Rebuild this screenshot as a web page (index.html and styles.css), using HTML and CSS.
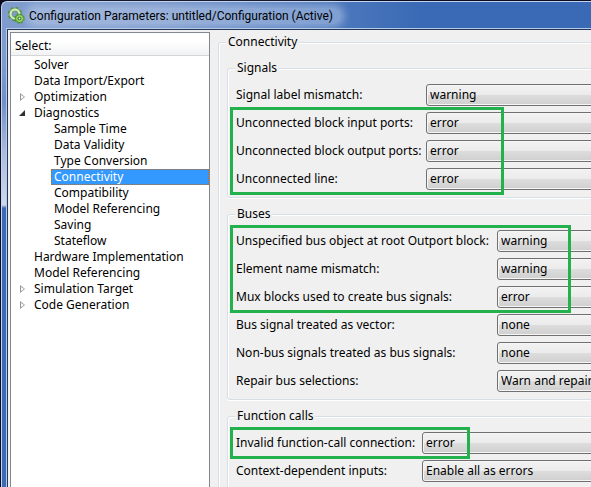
FILE: index.html
```html
<!DOCTYPE html>
<html lang="en">
<head>
<meta charset="utf-8">
<title>Configuration Parameters: untitled/Configuration (Active)</title>
<link rel="stylesheet" href="styles.css">
</head>
<body>
<div class="dialog">
  <header class="titlebar">
    <svg class="app-icon" viewBox="0 0 17 17" width="17" height="17" aria-hidden="true">
      <circle cx="7" cy="7" r="6" fill="none" stroke="#55923f" stroke-width="2.4" stroke-dasharray="2.5 2.2"/>
      <circle cx="7" cy="7" r="4.3" fill="none" stroke="#6fa955" stroke-width="3.4"/>
      <circle cx="7" cy="7" r="4.4" fill="none" stroke="#d9edc4" stroke-width="2"/>
      <circle cx="11.5" cy="11.5" r="4.3" fill="#3d8a2b" stroke="#3d8a2b" stroke-width="1.8" stroke-dasharray="1.9 1.5"/>
      <circle cx="11.5" cy="11.5" r="3.9" fill="#a8dc6c" stroke="#4b9635" stroke-width="1"/>
      <circle cx="11.5" cy="11.5" r="1.5" fill="#e9f6dc" stroke="#38802a" stroke-width="1.2"/>
    </svg>
    <h1 class="title">Configuration Parameters: untitled/Configuration (Active)</h1>
  </header>
  <div class="client">
    <nav class="tree-pane">
      <h2 class="tree-head">Select:</h2>
      <ul class="tree">
        <li><a href="#solver">Solver</a></li>
        <li><a href="#data">Data Import/Export</a></li>
        <li class="closed"><a href="#optimization">Optimization</a></li>
        <li class="open"><a href="#diagnostics">Diagnostics</a>
          <ul>
            <li><a href="#sample-time">Sample Time</a></li>
            <li><a href="#data-validity">Data Validity</a></li>
            <li><a href="#type-conversion">Type Conversion</a></li>
            <li><a class="selected" href="#connectivity" aria-current="page">Connectivity</a></li>
            <li><a href="#compatibility">Compatibility</a></li>
            <li><a href="#diag-referencing">Model Referencing</a></li>
            <li><a href="#saving">Saving</a></li>
            <li><a href="#stateflow">Stateflow</a></li>
          </ul>
        </li>
        <li><a href="#hardware">Hardware Implementation</a></li>
        <li><a href="#referencing">Model Referencing</a></li>
        <li class="closed"><a href="#simulation">Simulation Target</a></li>
        <li class="closed"><a href="#code">Code Generation</a></li>
      </ul>
    </nav>
    <main class="settings">
      <fieldset class="page">
        <legend>Connectivity</legend>
        <fieldset class="group signals">
          <legend>Signals</legend>
          <div class="row"><label for="s1">Signal label mismatch:</label><select id="s1"><option>warning</option></select></div>
          <div class="marked">
            <div class="row"><label for="s2">Unconnected block input ports:</label><select id="s2"><option>error</option></select></div>
            <div class="row"><label for="s3">Unconnected block output ports:</label><select id="s3"><option>error</option></select></div>
            <div class="row"><label for="s4">Unconnected line:</label><select id="s4"><option>error</option></select></div>
          </div>
        </fieldset>
        <fieldset class="group buses">
          <legend>Buses</legend>
          <div class="marked">
            <div class="row"><label for="b1">Unspecified bus object at root Outport block:</label><select id="b1"><option>warning</option></select></div>
            <div class="row"><label for="b2">Element name mismatch:</label><select id="b2"><option>warning</option></select></div>
            <div class="row"><label for="b3">Mux blocks used to create bus signals:</label><select id="b3"><option>error</option></select></div>
          </div>
          <div class="row"><label for="b4">Bus signal treated as vector:</label><select id="b4"><option>none</option></select></div>
          <div class="row"><label for="b5">Non-bus signals treated as bus signals:</label><select id="b5"><option>none</option></select></div>
          <div class="row"><label for="b6">Repair bus selections:</label><select id="b6"><option>Warn and repair</option></select></div>
        </fieldset>
        <fieldset class="group calls">
          <legend>Function calls</legend>
          <div class="marked">
            <div class="row"><label for="f1">Invalid function-call connection:</label><select id="f1"><option>error</option></select></div>
          </div>
          <div class="row"><label for="f2">Context-dependent inputs:</label><select id="f2"><option>Enable all as errors</option></select></div>
        </fieldset>
      </fieldset>
    </main>
  </div>
</div>
</body>
</html>
```
FILE: styles.css
```css
*, *::before, *::after { box-sizing: border-box; }

html { height: 100%; overflow: hidden; background: #0b0c22; }

body {
  margin: 0;
  height: 100%;
  overflow: hidden;
  font: 12px/16px "Noto Sans", Tahoma, sans-serif;
  color: #000;
}

/* The dialog runs past the right and bottom edges of the view. */
.dialog {
  display: flex;
  flex-direction: column;
  width: calc(100% + 160px);
  min-height: calc(100% + 40px);
  margin: 1px 0 0 1px;
  padding-left: 5px;
  border: 1px solid #c3d3ec;
  border-width: 1px 0 0 1px;
  border-radius: 6px 0 0 0;
  background:
    linear-gradient(#7f9ccd 0, #7f9ccd 60px, #7290c6 100px, #a9bbdd 150px, #cfd9ec 203px, #3c6bb5 206px) left / 5px 100% no-repeat,
    linear-gradient(90deg, #7f9ccd 0, #7896ca 150px, #4f7abd 320px, #3a6ab5 420px);
}

.titlebar {
  display: flex;
  align-items: center;
  gap: 4px;
  height: 27px;
  padding-left: 1px;
}

.app-icon { flex: none; }

.title {
  margin: 0;
  padding: 0 8px 0 0;
  font: 12px/16px Roboto, "Segoe UI", sans-serif;
  white-space: nowrap;
  border-radius: 8px;
  background: rgba(205, 219, 242, .4);
  box-shadow: 0 0 7px 4px rgba(205, 219, 242, .4);
}

.client {
  flex: 1;
  display: flex;
  gap: 8px;
  padding: 2px 0 0 2px;
  border: 1px solid #26365a;
  border-width: 1px 0 0 1px;
  background: #f0f0f0;
  box-shadow: -1px -1px #b4cbe8;
}

.tree-pane {
  flex: none;
  width: 200px;
  border: 1px solid #828790;
  background: #fff;
}

.tree-head {
  margin: 0;
  padding: 5px 4px 1px;
  border-bottom: 1px solid #d5d5d5;
  background: linear-gradient(#fff 40%, #f1f2f4);
  font: inherit;
}

.tree, .tree ul { margin: 0; padding: 0; list-style: none; }
.tree { padding: 1px 0 0 20px; }
.tree ul { padding-left: 20px; }
.tree li { position: relative; }

.tree a {
  display: block;
  height: 16px;
  padding-left: 3px;
  color: #000;
  text-decoration: none;
  white-space: nowrap;
}

.tree a.selected {
  background: #3399ff;
  color: #fff;
  outline: 1px dotted #c86a14;
  outline-offset: -1px;
}

.closed::before, .open::before {
  content: "";
  position: absolute;
  left: -11px;
  top: 4px;
  width: 5px;
  height: 8px;
  background: #989898;
  clip-path: polygon(evenodd, 0 0, 5px 4px, 0 8px, 0 0, 1px 2px, 4px 4px, 1px 6px, 1px 2px);
}

.open::before {
  left: -12px;
  top: 5px;
  width: 6px;
  height: 6px;
  background: #303030;
  clip-path: polygon(100% 0, 100% 100%, 0 100%);
}

.settings {
  flex: 1;
  display: flex;
  min-width: 0;
  padding-top: 2px;
}

fieldset {
  min-width: 0;
  margin: 0;
  border: 1px solid #d5dfe5;
  border-radius: 3px;
  box-shadow: inset 1px 1px #fff, 0 1px #fff;
}

legend {
  margin-left: -1px;
  padding: 0 2px;
  background: #f0f0f0;
}

.page { flex: 1; padding: 10px 8px 8px; }

.group { padding: 8px 8px 7px; }
.group + .group { margin-top: 8px; }

.signals { --label: 190px; --mark: 274px; }
.buses { --label: 261px; --mark: 341px; }
.calls { --label: 186px; --mark: 240px; }

.row {
  display: grid;
  grid-template-columns: var(--label) 1fr;
  align-items: center;
}

.row + .row, .row + .marked, .marked + .row { margin-top: 6px; }

label { white-space: nowrap; }

select {
  appearance: none;
  height: 22px;
  min-width: 0;
  margin: 0;
  padding: 0 3px;
  border: 1px solid #707070;
  border-radius: 3px;
  background: linear-gradient(#f2f2f2, #ebebeb 50%, #dddddd 50%, #cfcfcf);
  box-shadow: inset 0 0 0 1px #f6f6f6;
  font: inherit;
  color: #000;
}

/* Annotation frame drawn over the highlighted settings. */
.marked { position: relative; }

.marked::after {
  content: "";
  position: absolute;
  inset: -5px auto -5px -6px;
  width: var(--mark);
  border: 3px solid #22b14c;
  pointer-events: none;
}
```
